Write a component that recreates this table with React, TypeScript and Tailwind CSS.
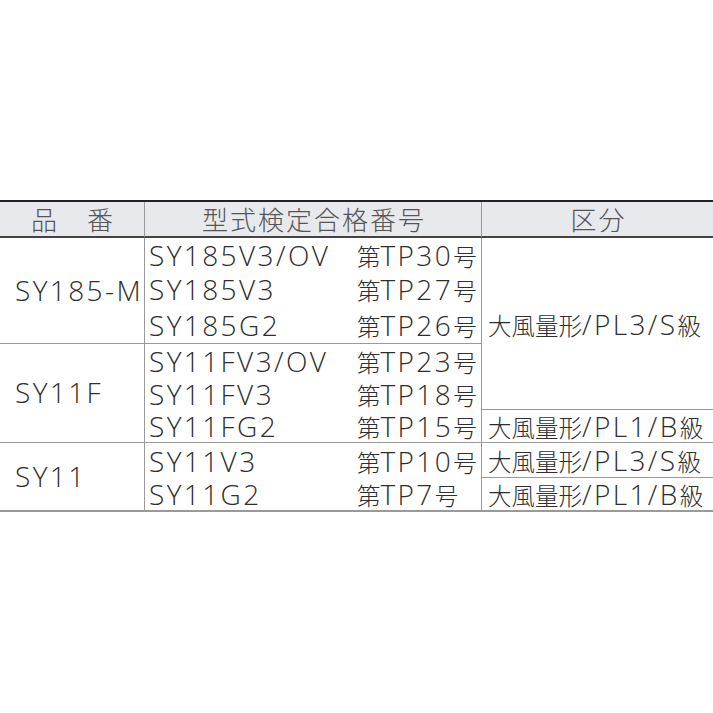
import React from "react";

const isCJK = (c: string) => /[\u3000-\u9fff\uff00-\uffef]/.test(c);

function T({ s }: { s: string }) {
  const runs: { cjk: boolean; t: string }[] = [];
  for (const ch of s) {
    const c = isCJK(ch);
    const last = runs[runs.length - 1];
    if (last && last.cjk === c) last.t += ch;
    else runs.push({ cjk: c, t: ch });
  }
  return (
    <span className="whitespace-nowrap">
      {runs.map((r, i) =>
        r.cjk ? (
          <span
            key={i}
            className="text-[23.5px] font-light"
            style={{ fontFamily: '"Noto Sans CJK JP", sans-serif' }}
          >
            {r.t}
          </span>
        ) : (
          <span
            key={i}
            className="text-[28px] font-light tracking-[2.4px]"
            style={{ fontFamily: '"Open Sans", "Noto Sans CJK JP", sans-serif' }}
          >
            {r.t}
          </span>
        )
      )}
    </span>
  );
}

const rows2: { m: string; n: string; b: string }[] = [
  { m: "SY185V3/OV", n: "第TP30号", b: "" },
  { m: "SY185V3", n: "第TP27号", b: "" },
  { m: "SY185G2", n: "第TP26号", b: "border-b border-b-[#9a9a9a]" },
  { m: "SY11FV3/OV", n: "第TP23号", b: "" },
  { m: "SY11FV3", n: "第TP18号", b: "" },
  { m: "SY11FG2", n: "第TP15号", b: "border-b border-b-[#9a9a9a]" },
  { m: "SY11V3", n: "第TP10号", b: "" },
  { m: "SY11G2", n: "第TP7号", b: "border-b-2 border-b-[#9a9a9a]" },
];

const head =
  "flex items-center justify-center text-[26px] font-light tracking-[2px] text-[#555] bg-[#e7e9ec] border-b-2 border-b-[#444]";

export default function App() {
  return (
    <div
      className="w-[713px] h-[713px] bg-white pt-[200px] text-[#2e2e2e]"
      style={{ fontFamily: '"Noto Sans CJK JP", sans-serif' }}
    >
      <div className="grid grid-cols-[145px_337px_1fr] grid-rows-[36px_34px_34px_38px_33px_33px_33px_35px_34px] border-t-2 border-[#222] leading-none">
        {/* header */}
        <div className={`${head} row-start-1 col-start-1 border-r border-r-[#9a9a9a] pl-[2px]`}>品　番</div>
        <div className={`${head} row-start-1 col-start-2 border-r border-r-[#9a9a9a] pl-[2px]`}>型式検定合格番号</div>
        <div className={`${head} row-start-1 col-start-3 pl-[2px]`}>区分</div>

        {/* col 1 */}
        <div className="col-start-1 row-start-2 row-span-3 border-r border-b border-[#9a9a9a] flex items-center pl-[15px] pb-[2px]">
          <T s="SY185-M" />
        </div>
        <div className="col-start-1 row-start-5 row-span-3 border-r border-b border-[#9a9a9a] flex items-center pl-[15px] pb-[2px]">
          <T s="SY11F" />
        </div>
        <div className="col-start-1 row-start-8 row-span-2 border-r border-b-2 border-[#9a9a9a] flex items-center pl-[15px] pb-[1px]">
          <T s="SY11" />
        </div>

        {/* col 2 */}
        {rows2.map((r, i) => (
          <div
            key={i}
            className={`col-start-2 border-r border-r-[#9a9a9a] flex items-center pl-[4px] ${r.b}`}
            style={{ gridRowStart: i + 2 }}
          >
            <span className="w-[208px] shrink-0">
              <T s={r.m} />
            </span>
            <T s={r.n} />
          </div>
        ))}

        {/* col 3 */}
        <div className="col-start-3 row-start-2 row-span-5 border-b border-[#9a9a9a] flex items-center pl-[6px]">
          <T s="大風量形/PL3/S級" />
        </div>
        <div className="col-start-3 row-start-7 border-b border-[#9a9a9a] flex items-center pl-[6px]">
          <T s="大風量形/PL1/B級" />
        </div>
        <div className="col-start-3 row-start-8 border-b border-[#9a9a9a] flex items-center pl-[6px]">
          <T s="大風量形/PL3/S級" />
        </div>
        <div className="col-start-3 row-start-9 border-b-2 border-[#9a9a9a] flex items-center pl-[6px]">
          <T s="大風量形/PL1/B級" />
        </div>
      </div>
    </div>
  );
}
